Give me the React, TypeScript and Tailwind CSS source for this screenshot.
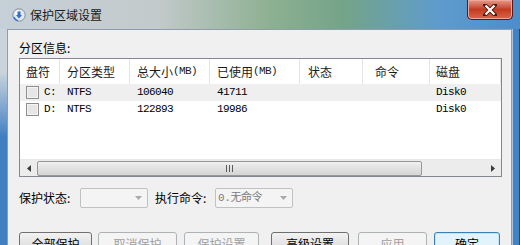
const cjk = { fontFamily: '"Noto Sans CJK SC", "Noto Sans", sans-serif' };
const mono = { fontFamily: '"Liberation Mono", "Noto Sans CJK SC", monospace' };

const columns = [
  { title: '盘符', w: 'w-[40px]', pl: 'pl-[6px]' },
  { title: '分区类型', w: 'w-[70px]', pl: 'pl-[7px]' },
  { title: '总大小', unit: '(MB)', w: 'w-[80px]', pl: 'pl-[7px]' },
  { title: '已使用', unit: '(MB)', w: 'w-[90px]', pl: 'pl-[7px]' },
  { title: '状态', w: 'w-[63px]', pl: 'pl-[8px]' },
  { title: '命令', w: 'w-[67px]', pl: 'pl-[12px]' },
  { title: '磁盘', w: 'flex-1', pl: 'pl-[6px]' },
];

const partitions = [
  { letter: 'C:', type: 'NTFS', total: '106040', used: '41711', disk: 'Disk0' },
  { letter: 'D:', type: 'NTFS', total: '122893', used: '19986', disk: 'Disk0' },
];

function TitleIcon() {
  return (
    <svg width="14" height="14" viewBox="0 0 14 14">
      <circle cx="7" cy="7" r="6.2" fill="#e4e8ee" stroke="#6c7886" strokeWidth="0.8" />
      <circle cx="5.5" cy="5" r="2.5" fill="#ffffff" />
      <path d="M5.5 3.5 L8.5 3.5 L8.5 7 L10 7 L7 10.5 L4 7 L5.5 7 Z" fill="#2f6fd0" />
      <path d="M2 9 Q3 12 6 12.5" stroke="#2f6fd0" strokeWidth="1.2" fill="none" />
    </svg>
  );
}

function Checkbox() {
  return (
    <span className="inline-block h-[13px] w-[13px] border border-[#8e8f8f] bg-[#e6e6e6] shadow-[inset_0_0_0_1px_#f4f4f4]" />
  );
}

function ScrollArrow({ dir }: { dir: 'left' | 'right' }) {
  return (
    <div className="flex h-full w-[17px] items-center justify-center">
      <svg width="4" height="7" viewBox="0 0 4 7">
        {dir === 'left' ? <path d="M4 0 L0 3.5 L4 7 Z" fill="#3b3b3b" /> : <path d="M0 0 L4 3.5 L0 7 Z" fill="#3b3b3b" />}
      </svg>
    </div>
  );
}

function ComboBox({ width, text }: { width: string; text?: string }) {
  return (
    <div className={`flex h-[20px] ${width} items-center rounded-[2px] border border-[#c1c1c1] bg-[#f4f4f4]`}>
      <span className="flex-1 pl-[2px] text-[11px] tracking-[-0.4px] text-[#7a7a7a]" style={mono}>
        {text}
      </span>
      <svg width="7" height="4" viewBox="0 0 7 4" className="mr-[5px]">
        <path d="M0 0 L7 0 L3.5 4 Z" fill="#a9a9a9" />
      </svg>
    </div>
  );
}

function Button({ label, width, kind }: { label: string; width: string; kind: 'normal' | 'disabled' | 'default' }) {
  const look =
    kind === 'disabled'
      ? 'border-[#adb2b5] text-[#a0a0a0] bg-[#f4f4f4]'
      : kind === 'default'
        ? 'border-[#3c7fb1] text-black bg-[#e3f3fc] shadow-[inset_0_0_0_1px_#bee6fd]'
        : 'border-[#707070] text-black bg-linear-to-b from-[#f2f2f2] to-[#d6d6d6]';
  return (
    <div className={`flex h-[23px] shrink-0 ${width} items-center justify-center rounded-[3px] border text-[12px] ${look}`}>
      {label}
    </div>
  );
}

export default function App() {
  return (
    <div className="flex h-[245px] w-[520px] flex-col bg-[#5d8fbf]" style={cjk}>
      {/* title bar */}
      <div className="flex h-[29px] shrink-0 bg-[linear-gradient(to_right,#c6d0d8,#c3cacb_30%,#8db092_52%,#74a488_66%,#5f9bcc_84%,#4d8dcb)]">
        <div className="ml-[12px] mt-[8px]">
          <TitleIcon />
        </div>
        <span className="ml-[4px] mt-[6px] text-[12px] text-[#1a1a1a]">保护区域设置</span>
        <div className="ml-auto mr-[7px] flex h-[20px] w-[46px] items-center justify-center rounded-b-[5px] border border-t-0 border-[#5a1a12] bg-linear-to-b from-[#e49a8a] via-[#c23a20] to-[#d7664a] shadow-[inset_0_0_0_1px_#eca89a]">
          <svg width="14" height="12" viewBox="0 0 14 12">
            <path d="M2 1 L12 11 M12 1 L2 11" stroke="#4b1a12" strokeWidth="4" strokeLinecap="square" />
            <path d="M2.5 1.5 L11.5 10.5 M11.5 1.5 L2.5 10.5" stroke="#ffffff" strokeWidth="2.2" />
          </svg>
        </div>
      </div>

      {/* body with frame */}
      <div className="flex min-h-0 flex-1 overflow-hidden">
        <div className="w-[7px] shrink-0 bg-linear-to-b from-[#c9d4dc] from-20% to-[#3f7fc2] to-50%" />
        <div className="w-[505px] shrink-0 border-l border-r border-t border-[#8e9cab] bg-[#f0f0f0] px-[11px]">
          <div className="mt-[9px] h-[17px] text-[12px] leading-[17px] text-black">分区信息:</div>

          {/* list view */}
          <div className="mt-[2px] flex h-[119px] w-[483px] flex-col border border-[#828790] bg-white">
            <div className="flex h-[25px] shrink-0 items-center">
              {columns.map((c) => (
                <div key={c.title} className={`flex h-full ${c.w} ${c.pl} items-center border-r border-[#e5e5e5] text-[12px] text-[#1a1a1a]`}>
                  {c.title}
                  {c.unit && (
                    <span className="text-[11px] tracking-[-0.6px]" style={mono}>
                      {c.unit}
                    </span>
                  )}
                </div>
              ))}
            </div>
            {partitions.map((p, i) => (
              <div
                key={p.letter}
                className={`flex h-[17px] shrink-0 items-center text-[11px] tracking-[-0.6px] text-black ${i === 0 ? 'bg-[#efefef]' : ''}`}
                style={mono}
              >
                <div className="flex w-[40px] items-center pl-[6px]">
                  <Checkbox />
                  <span className="ml-[5px]">{p.letter}</span>
                </div>
                <div className="w-[70px] pl-[7px]">{p.type}</div>
                <div className="w-[80px] pl-[7px]">{p.total}</div>
                <div className="w-[90px] pl-[7px]">{p.used}</div>
                <div className="w-[63px]" />
                <div className="w-[67px]" />
                <div className="flex-1 pl-[6px]">{p.disk}</div>
              </div>
            ))}
            <div className="flex-1" />
            {/* horizontal scrollbar */}
            <div className="flex h-[17px] shrink-0 items-center border-t border-[#e8e8e8] bg-[#ececec]">
              <ScrollArrow dir="left" />
              <div className="flex h-[15px] w-[385px] items-center justify-center rounded-[2px] border border-[#979797] bg-linear-to-b from-[#f0f0f0] to-[#d4d4d4]">
                <svg width="7" height="7" viewBox="0 0 7 7">
                  <path d="M0.5 0 V7 M3.5 0 V7 M6.5 0 V7" stroke="#5a5a5a" strokeWidth="1" />
                </svg>
              </div>
              <div className="flex-1" />
              <ScrollArrow dir="right" />
            </div>
          </div>

          {/* combo row */}
          <div className="mt-[11px] flex h-[20px] items-center text-[12px] text-black">
            <span className="w-[61px]">保护状态:</span>
            <ComboBox width="w-[68px]" />
            <span className="ml-[7px] w-[60px]">执行命令:</span>
            <ComboBox width="w-[78px]" text="0.无命令" />
          </div>

          {/* buttons */}
          <div className="mt-[24px] flex items-start">
            <Button label="全部保护" width="w-[73px]" kind="normal" />
            <div className="ml-[6px]">
              <Button label="取消保护" width="w-[79px]" kind="disabled" />
            </div>
            <div className="ml-[7px]">
              <Button label="保护设置" width="w-[75px]" kind="disabled" />
            </div>
            <div className="ml-[12px]">
              <Button label="高级设置" width="w-[78px]" kind="normal" />
            </div>
            <div className="ml-[9px]">
              <Button label="应用" width="w-[69px]" kind="disabled" />
            </div>
            <div className="ml-[7px]">
              <Button label="确定" width="w-[66px]" kind="default" />
            </div>
          </div>
        </div>
        <div className="flex w-[8px] shrink-0">
          <div className="w-[1px] bg-[#a9c4de]" />
          <div className="flex-1 bg-[#4383c4]" />
          <div className="w-[1px] bg-[#2b4561]" />
        </div>
      </div>
    </div>
  );
}
